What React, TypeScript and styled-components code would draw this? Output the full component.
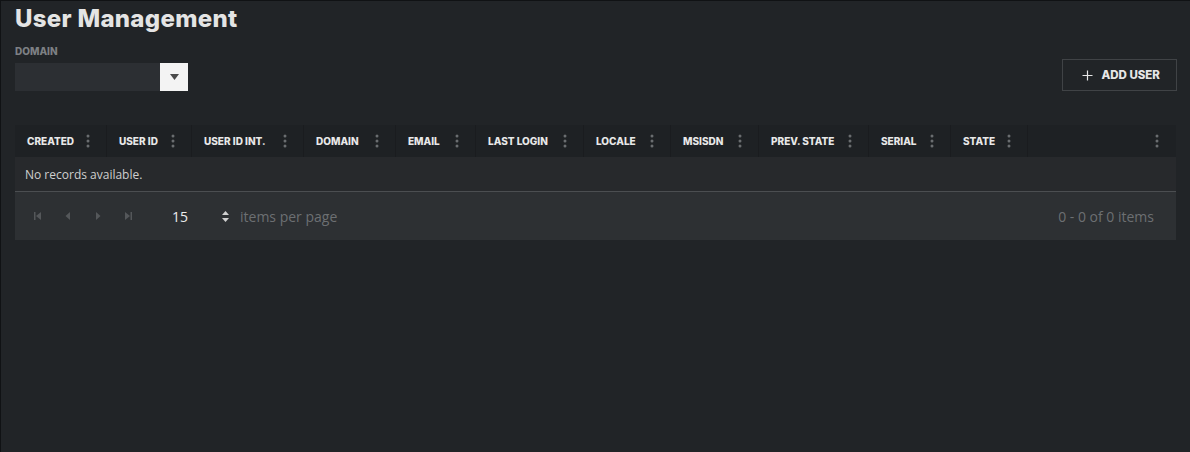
import React from 'react';
import styled, { createGlobalStyle } from 'styled-components';

const GlobalStyle = createGlobalStyle`
  html, body {
    margin: 0;
    padding: 0;
    background: #212427;
  }
  * {
    box-sizing: border-box;
  }
`;

const columns = [
  { title: 'CREATED', width: 91 },
  { title: 'USER ID', width: 85 },
  { title: 'USER ID INT.', width: 112 },
  { title: 'DOMAIN', width: 92 },
  { title: 'EMAIL', width: 80 },
  { title: 'LAST LOGIN', width: 108 },
  { title: 'LOCALE', width: 87 },
  { title: 'MSISDN', width: 88 },
  { title: 'PREV. STATE', width: 110 },
  { title: 'SERIAL', width: 82 },
  { title: 'STATE', width: 77 },
  { title: '', width: 148 },
];

const Kebab = () => (
  <svg width="4" height="14" viewBox="0 0 4 14">
    <circle cx="2" cy="2" r="1.5" fill="#6a6d70" />
    <circle cx="2" cy="7" r="1.5" fill="#6a6d70" />
    <circle cx="2" cy="12" r="1.5" fill="#6a6d70" />
  </svg>
);

const PagerIcon = ({ kind }: { kind: 'first' | 'prev' | 'next' | 'last' }) => (
  <svg width="10" height="10" viewBox="0 0 10 10">
    {kind === 'first' && (
      <>
        <rect x="1" y="1" width="1.5" height="8" fill="#54575a" />
        <polygon points="8,1 3,5 8,9" fill="#54575a" />
      </>
    )}
    {kind === 'prev' && <polygon points="7,1 2.5,5 7,9" fill="#54575a" />}
    {kind === 'next' && <polygon points="3,1 7.5,5 3,9" fill="#54575a" />}
    {kind === 'last' && (
      <>
        <polygon points="2,1 7,5 2,9" fill="#54575a" />
        <rect x="7.5" y="1" width="1.5" height="8" fill="#54575a" />
      </>
    )}
  </svg>
);

const App = () => {
  return (
    <Page>
      <GlobalStyle />
      <Title>User Management</Title>

      <Toolbar>
        <Filter>
          <Label>DOMAIN</Label>
          <Select>
            <SelectInput />
            <SelectButton>
              <svg width="9" height="6" viewBox="0 0 9 6">
                <polygon points="0,0 9,0 4.5,6" fill="#4a4a4a" />
              </svg>
            </SelectButton>
          </Select>
        </Filter>

        <AddButton>
          <svg width="11" height="11" viewBox="0 0 11 11">
            <path d="M5.5 0.5v10M0.5 5.5h10" stroke="#e6e6e6" strokeWidth="1.2" />
          </svg>
          ADD USER
        </AddButton>
      </Toolbar>

      <Grid>
        <HeaderRow>
          {columns.map((col, i) => (
            <HeaderCell key={i} style={{ width: col.width }}>
              <span>{col.title}</span>
              <Kebab />
            </HeaderCell>
          ))}
        </HeaderRow>

        <EmptyRow>No records available.</EmptyRow>

        <Pager>
          <PagerNav>
            <PagerIcon kind="first" />
            <PagerIcon kind="prev" />
            <PagerIcon kind="next" />
            <PagerIcon kind="last" />
          </PagerNav>
          <PageSize>
            <span>15</span>
            <svg width="7" height="11" viewBox="0 0 7 11">
              <polygon points="3.5,0 7,4 0,4" fill="#d0d0d0" />
              <polygon points="0,7 7,7 3.5,11" fill="#d0d0d0" />
            </svg>
          </PageSize>
          <PagerText>items per page</PagerText>
          <PagerInfo>0 - 0 of 0 items</PagerInfo>
        </Pager>
      </Grid>
    </Page>
  );
};

const Page = styled.div`
  width: 1190px;
  height: 452px;
  border-top: 1px solid #101214;
  border-left: 1px solid #101214;
  background: #212427;
  padding: 0 14px 0 14px;
  font-family: 'Open Sans', 'Liberation Sans', sans-serif;
`;

const Title = styled.h1`
  margin: 0;
  padding-top: 3px;
  font-family: Inter, 'Liberation Sans', sans-serif;
  font-size: 24px;
  font-weight: 800;
  letter-spacing: 0.3px;
  line-height: 30px;
  color: #e4e4e4;
`;

const Toolbar = styled.div`
  display: flex;
  justify-content: space-between;
  align-items: flex-end;
  margin-top: 10px;
`;

const Filter = styled.div`
  display: flex;
  flex-direction: column;
`;

const Label = styled.div`
  font-family: Inter, 'Liberation Sans', sans-serif;
  font-size: 10px;
  font-weight: 800;
  color: #7d8084;
  line-height: 13px;
  margin-bottom: 5px;
  padding-top: 1px;
`;

const Select = styled.div`
  display: flex;
  height: 28px;
  width: 173px;
`;

const SelectInput = styled.div`
  flex: 1;
  background: #2c2f33;
`;

const SelectButton = styled.div`
  width: 28px;
  background: #f3f3f3;
  display: flex;
  align-items: center;
  justify-content: center;
`;

const AddButton = styled.button`
  display: flex;
  align-items: center;
  gap: 8px;
  height: 32px;
  padding: 0 16px 0 19px;
  margin-right: -1px;
  background: transparent;
  border: 1px solid #404346;
  color: #e6e6e6;
  font-family: Inter, 'Liberation Sans', sans-serif;
  font-size: 11.5px;
  font-weight: 800;
  letter-spacing: 0;
`;

const Grid = styled.div`
  margin-top: 34px;
  width: 1161px;
`;

const HeaderRow = styled.div`
  display: flex;
  height: 32px;
  background: #1e2124;
`;

const HeaderCell = styled.div`
  display: flex;
  align-items: center;
  justify-content: space-between;
  padding: 0 16px 0 12px;
  border-left: 1px solid #1a1c1f;
  font-family: Inter, 'Liberation Sans', sans-serif;
  font-size: 10px;
  font-weight: 800;
  color: #e8e8e8;
  letter-spacing: 0;

  &:first-child {
    border-left: none;
  }
`;

const EmptyRow = styled.div`
  height: 35px;
  display: flex;
  align-items: center;
  padding-left: 10px;
  background: #27292c;
  border-bottom: 1px solid #4b4e51;
  font-size: 12px;
  color: #cfcfcf;
`;

const Pager = styled.div`
  height: 48px;
  display: flex;
  align-items: center;
  background: #2d3033;
  padding: 0 22px 0 18px;
`;

const PagerNav = styled.div`
  display: flex;
  gap: 20px;
  align-items: center;
`;

const PageSize = styled.div`
  display: flex;
  align-items: center;
  justify-content: space-between;
  width: 59px;
  margin-left: 37px;
  color: #ececec;
  font-size: 14px;

  span {
    padding-left: 2px;
  }
`;

const PagerText = styled.span`
  margin-left: 11px;
  font-size: 14px;
  color: #6c6f72;
`;

const PagerInfo = styled.span`
  margin-left: auto;
  font-size: 14px;
  color: #6c6f72;
`;

export default App;
